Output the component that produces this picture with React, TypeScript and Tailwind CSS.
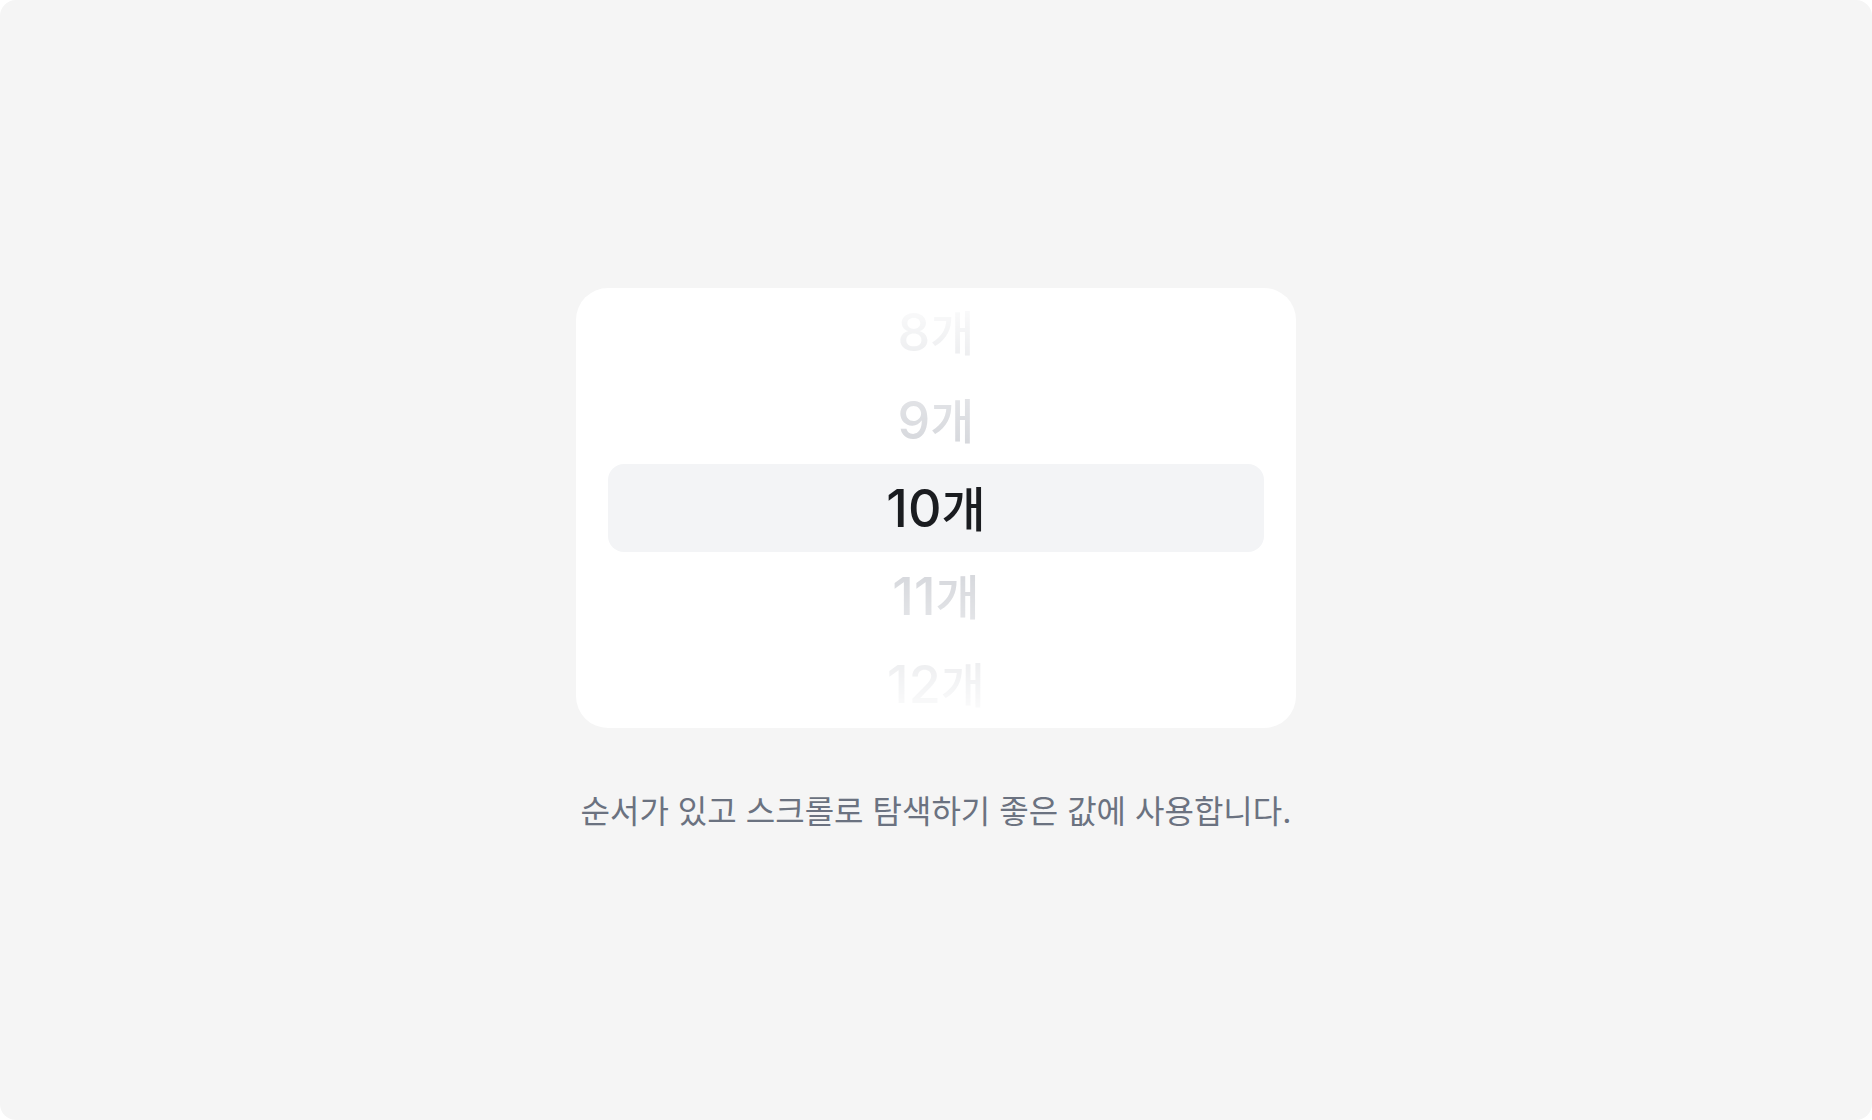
import { useState } from 'react';
import clsx from 'clsx';

const VISIBLE_ROWS = 5;
const MAX_COUNT = 99;

export default function App() {
  const [selected, setSelected] = useState(10);

  const first = selected - Math.floor(VISIBLE_ROWS / 2);
  const counts = Array.from({ length: VISIBLE_ROWS }, (_, i) => first + i);

  const handleSelect = (count: number) => {
    if (count < 3 || count > MAX_COUNT - 2) return;
    setSelected(count);
  };

  return (
    <div className="bg-white">
      <main className="flex min-h-screen flex-col items-center justify-center rounded-2xl bg-[#f5f5f5] font-['Inter','Noto_Sans_CJK_KR',sans-serif]">
        <div className="w-full max-w-[720px] rounded-[32px] bg-white px-8">
          <div
            role="listbox"
            aria-label="개수"
            className="flex flex-col mask-[linear-gradient(transparent,black_40%,black_60%,transparent)]"
          >
            {counts.map((count) => (
              <button
                key={count}
                type="button"
                role="option"
                aria-selected={count === selected}
                onClick={() => handleSelect(count)}
                className={clsx(
                  'h-22 rounded-2xl pt-0.5 text-center text-[52px] leading-none font-medium',
                  count === selected ? 'bg-[#f3f4f6] text-[#1a1c20]' : 'text-[#d1d3d8]',
                )}
              >
                {count}
                <span className="text-[48px] leading-none">개</span>
              </button>
            ))}
          </div>
        </div>
        <p className="mt-16 text-[32px] leading-10 text-[#6b7280]">
          순서가 있고 스크롤로 탐색하기 좋은 값에 사용합니다.
        </p>
      </main>
    </div>
  );
}
